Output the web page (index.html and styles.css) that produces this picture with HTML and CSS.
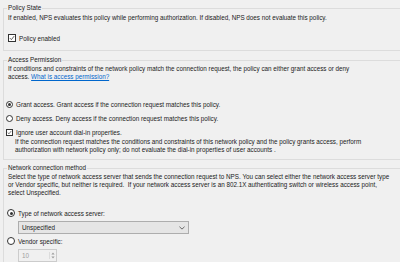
FILE: index.html
```html
<!DOCTYPE html>
<html lang="en">

<head>
      <meta charset="UTF-8">
      <title>Policy settings</title>
      <link rel="stylesheet" href="styles.css">
</head>

<body>
      <!-- Policy State -->
      <fieldset class="group" id="policyState">
            <legend>Policy State</legend>
            <p class="desc">If enabled, NPS evaluates this policy while performing authorization. If disabled, NPS does not evaluate this policy.</p>
            <label class="option option-state">
                  <span class="box checked"><svg viewBox="0 0 7 7"><path d="M1 3.6 L2.8 5.4 L6 1.3" /></svg></span>
                  Policy enabled
            </label>
      </fieldset>

      <!-- Access Permission -->
      <fieldset class="group" id="accessPermission">
            <legend>Access Permission</legend>
            <p class="desc">If conditions and constraints of the network policy match the connection request, the policy can either grant access or deny<br>access. <a href="#" class="link">What is access permission?</a></p>
            <label class="option option-grant">
                  <span class="radio checked"></span>
                  Grant access. Grant access if the connection request matches this policy.
            </label>
            <label class="option">
                  <span class="radio"></span>
                  Deny access. Deny access if the connection request matches this policy.
            </label>
            <label class="option">
                  <span class="box checked"><svg viewBox="0 0 7 7"><path d="M1 3.6 L2.8 5.4 L6 1.3" /></svg></span>
                  Ignore user account dial-in properties.
            </label>
            <p class="desc note">If the connection request matches the conditions and constraints of this network policy and the policy grants access, perform<br>authorization with network policy only; do not evaluate the dial-in properties of user accounts .</p>
      </fieldset>

      <!-- Network connection method -->
      <fieldset class="group" id="connectionMethod">
            <legend>Network connection method</legend>
            <p class="desc">Select the type of network access server that sends the connection request to NPS. You can select either the network access server type<br>or Vendor specific, but neither is required.&nbsp; If your network access server is an 802.1X authenticating switch or wireless access point,<br>select Unspecified.</p>
            <label class="option option-type">
                  <span class="radio checked"></span>
                  Type of network access server:
            </label>
            <div class="select">
                  <span>Unspecified</span>
                  <svg class="chevron" viewBox="0 0 7 4"><path d="M0.5 0.5 L3.5 3.3 L6.5 0.5" /></svg>
            </div>
            <label class="option option-vendor">
                  <span class="radio"></span>
                  Vendor specific:
            </label>
            <div class="spin">
                  <span>10</span>
                  <span class="spin-btns">
                        <svg viewBox="0 0 5 3"><path d="M0.5 2.6 L2.5 0.4 L4.5 2.6 Z" /></svg>
                        <svg viewBox="0 0 5 3"><path d="M0.5 0.4 L2.5 2.6 L4.5 0.4 Z" /></svg>
                  </span>
            </div>
      </fieldset>
</body>

</html>
```

FILE: styles.css
```css
/* page */
body {
      margin: 0;
      background-color: #f0f0f0;
      font-family: "Liberation Sans", Arial, sans-serif;
      font-size: 6.3px;
      color: #1a1a1a;
      overflow: hidden;
}

/* group boxes */
fieldset.group {
      margin: 4px -12px 0 3px;
      padding: 0 0 7px 4px;
      border: 1px solid #dcdcdc;
      min-width: 0;
}

fieldset.group>legend {
      padding: 0 1px;
      margin-left: -1px;
      line-height: 8px;
}

#accessPermission {
      margin-top: 5px;
      padding-bottom: 5px;
}

#connectionMethod {
      margin-top: 4px;
      padding-bottom: 4px;
}

/* text blocks */
p.desc {
      margin: 2px 0 0 0;
      line-height: 8px;
      white-space: nowrap;
}

#accessPermission p.desc,
#connectionMethod p.desc {
      margin-top: 1px;
}

#accessPermission p.note {
      margin-left: 7px;
}

a.link {
      color: #0066cc;
}

/* radio / checkbox rows */
label.option {
      display: flex;
      align-items: center;
      gap: 3px;
      height: 10px;
      margin-top: 4px;
      margin-left: -2px;
      white-space: nowrap;
}

label.option-state {
      margin-top: 11px;
      margin-left: 0;
}

label.option-grant {
      margin-top: 18px;
}

label.option-type {
      margin-top: 11px;
      margin-left: -1px;
}

label.option-vendor {
      margin-top: 2px;
      margin-left: -1px;
}

span.box,
span.radio {
      display: inline-block;
      box-sizing: border-box;
      width: 7px;
      height: 7px;
      border: 1px solid #333333;
      background-color: #ffffff;
      position: relative;
}

span.radio {
      border-radius: 50%;
}

label.option-type span.radio,
label.option-vendor span.radio,
label.option-state span.box {
      width: 8px;
      height: 8px;
}

span.radio.checked::after {
      content: "";
      position: absolute;
      left: 50%;
      top: 50%;
      width: 3px;
      height: 3px;
      margin: -1.5px 0 0 -1.5px;
      border-radius: 50%;
      background-color: #333333;
}

span.box svg {
      position: absolute;
      left: 0;
      top: 0;
      width: 100%;
      height: 100%;
}

span.box svg path {
      fill: none;
      stroke: #333333;
      stroke-width: 0.9;
}

/* dropdown */
div.select {
      display: flex;
      align-items: center;
      justify-content: space-between;
      box-sizing: border-box;
      width: 171px;
      height: 13px;
      margin: 3px 0 0 10px;
      padding: 0 3px 0 3px;
      border: 1px solid #adadad;
      background-color: #e5e5e5;
}

svg.chevron {
      width: 6px;
      height: 4px;
}

svg.chevron path {
      fill: none;
      stroke: #555555;
      stroke-width: 1;
}

/* spin box (disabled) */
div.spin {
      display: flex;
      align-items: center;
      justify-content: space-between;
      box-sizing: border-box;
      width: 39px;
      height: 13px;
      margin: 3px 0 0 10px;
      padding: 0 1px 0 3px;
      border: 1px solid #cccccc;
      background-color: #f0f0f0;
      color: #a0a0a0;
}

span.spin-btns {
      display: flex;
      flex-direction: column;
      gap: 1px;
      padding-left: 1px;
      border-left: 1px solid #dcdcdc;
}

span.spin-btns svg {
      width: 4px;
      height: 3px;
}

span.spin-btns svg path {
      fill: #9a9a9a;
}
```
